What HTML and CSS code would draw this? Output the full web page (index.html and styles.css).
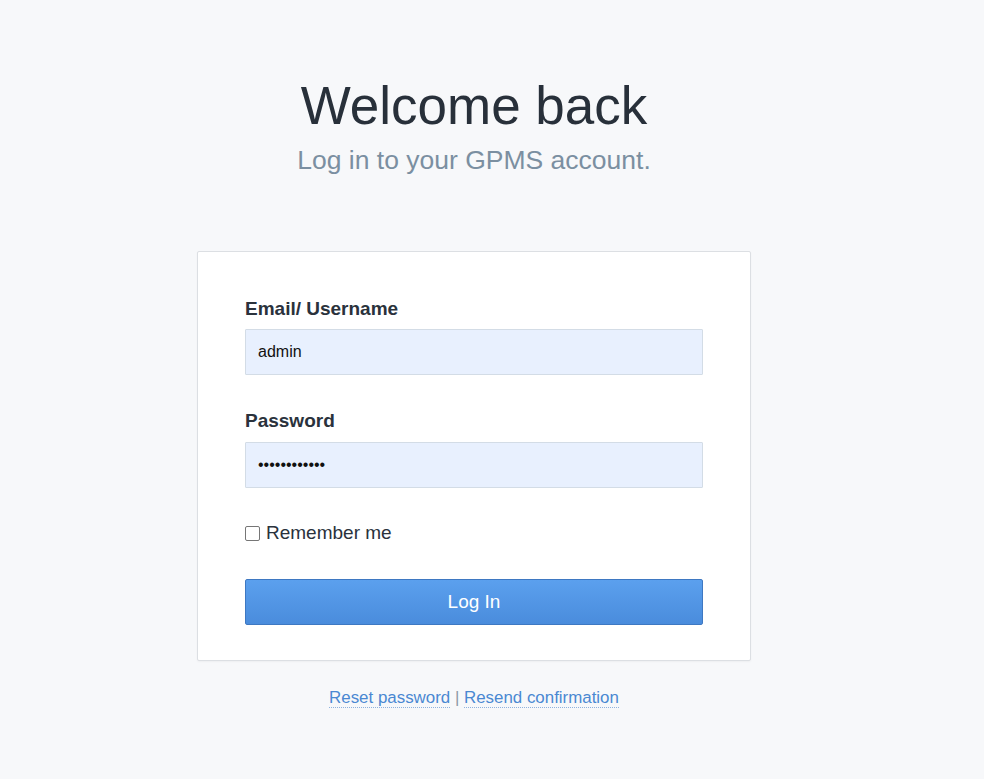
FILE: index.html
```html
<!DOCTYPE html>
<html lang="en">
<head>
<meta charset="utf-8">
<title>Log in</title>
<link rel="stylesheet" href="styles.css">
</head>
<body>
<main class="page">
  <header class="intro">
    <h1 class="title">Welcome back</h1>
    <p class="subtitle">Log in to your GPMS account.</p>
  </header>
  <form class="card">
    <label class="label" for="user">Email/ Username</label>
    <input class="field" id="user" type="text" value="admin">
    <label class="label label-pw" for="pw">Password</label>
    <input class="field field-pw" id="pw" type="password" value="adminpass123">
    <label class="remember"><input class="check" type="checkbox"><span>Remember me</span></label>
    <button class="btn" type="button">Log In</button>
  </form>
  <p class="links"><a href="#" class="link">Reset password</a> <span class="sep">|</span> <a href="#" class="link">Resend confirmation</a></p>
</main>
</body>
</html>
```

FILE: styles.css
```css
html, body {
  margin: 0;
  padding: 0;
  background: #f7f8fa;
}
body {
  font-family: "Liberation Sans", Arial, sans-serif;
  color: #2a323c;
}
.page {
  display: flex;
  flex-direction: column;
  align-items: center;
  padding: 75px 36px 0 0;
}
.intro {
  display: flex;
  flex-direction: column;
  align-items: center;
}
.title {
  margin: 0;
  font-size: 53px;
  font-weight: 400;
  line-height: normal;
  color: #28303a;
}
.subtitle {
  margin: 9px 0 0;
  font-size: 26.5px;
  line-height: normal;
  color: #7b8fa1;
}
.card {
  box-sizing: border-box;
  width: 554px;
  margin-top: 75px;
  background: #fff;
  border: 1px solid #dcdfe3;
  border-radius: 2px;
  box-shadow: 0 1px 2px rgba(0,0,0,0.04);
  padding: 46px 47px 35px;
  display: flex;
  flex-direction: column;
}
.label {
  font-size: 19px;
  font-weight: 700;
  line-height: normal;
  color: #2a323c;
}
.label-pw {
  margin-top: 35px;
}
.field {
  box-sizing: border-box;
  height: 46px;
  margin-top: 9px;
  border: 1px solid #d3dce6;
  border-radius: 1px;
  background: #e8f0fe;
  padding: 0 12px;
  font-family: "Liberation Sans", Arial, sans-serif;
  font-size: 16px;
  color: #111;
  outline: none;
}
.field-pw {
  margin-top: 10px;
}
.remember {
  margin-top: 34px;
  display: flex;
  align-items: center;
  gap: 6px;
  font-size: 19px;
  line-height: normal;
  color: #2a323c;
}
.check {
  appearance: none;
  -webkit-appearance: none;
  margin: 0;
  width: 15px;
  height: 15px;
  border: 1px solid #767676;
  border-radius: 2px;
  background: #fff;
  box-sizing: border-box;
}
.btn {
  margin-top: 35px;
  height: 46px;
  border: 1px solid #3e78c2;
  border-radius: 2px;
  background: linear-gradient(#5ba0ee, #4a8cdc);
  color: #fff;
  font-family: "Liberation Sans", Arial, sans-serif;
  font-size: 19px;
  padding: 0;
}
.links {
  margin: 27px 0 0;
  font-size: 16.9px;
  line-height: normal;
  color: #9aa4ae;
}
.link {
  color: #4a88d2;
  text-decoration: none;
  border-bottom: 1px dotted #8fb2de;
}
.sep {
  color: #8d98a4;
}
```
